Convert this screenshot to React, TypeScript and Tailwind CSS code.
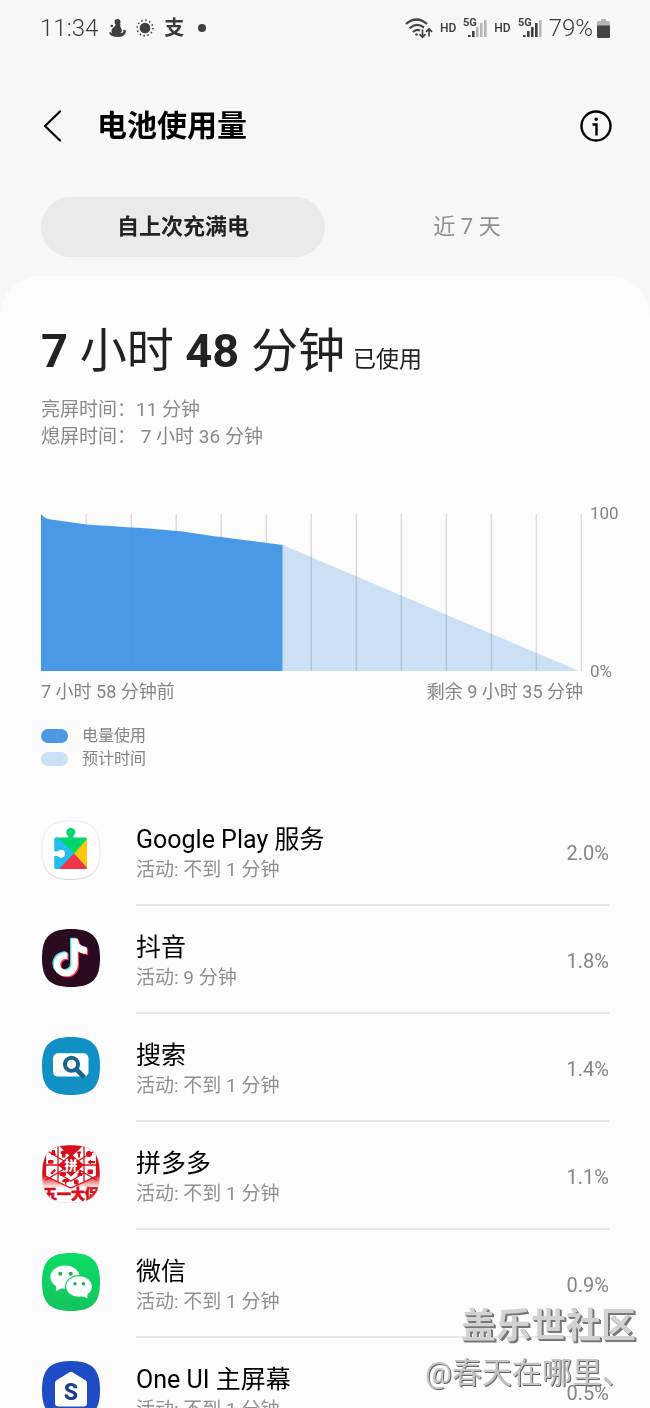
import React from 'react';
import { FaTiktok } from 'react-icons/fa6';

const SQUIRCLE = 'M29 0C50 0 58 8 58 29S50 58 29 58 0 50 0 29 8 0 29 0Z';

const PlayServicesIcon = () => (
  <svg viewBox="0 0 58 58" className="size-[58px] overflow-visible" aria-hidden="true">
    <path d={SQUIRCLE} fill="#d4d4d4" transform="translate(0 1)" />
    <path d={SQUIRCLE} fill="#fff" stroke="#e6e6e6" strokeWidth="0.8" />
    <clipPath id="puzzle">
      <path d="M14 16.5H26.3V14.9A4.500 4.500 0 1 1 31.3 14.9V16.5H43.5Q45 16.5 45 18V46.5Q45 48 43.5 48H14Q12.500 48 12.500 46.500V35.200H15.700A4.200 4.200 0 1 0 15.700 30.200H12.500V18Q12.500 16.500 14 16.500Z" />
    </clipPath>
    <g clipPath="url(#puzzle)">
      <rect width="58" height="58" fill="#00d66b" />
      <path d="M12 13 32 32.500 16 50H10V13Z" fill="#22bdf0" />
      <path d="M46 17 32 32.500 46 48Z" fill="#fdc60a" />
      <path d="M32 32.500 47 49H16Z" fill="#f0354a" />
    </g>
  </svg>
);

const DouyinIcon = () => (
  <svg viewBox="0 0 58 58" className="size-[58px]" aria-hidden="true">
    <path d={SQUIRCLE} fill="#2b0b1f" />
    <FaTiktok x="8" y="8.500" size="38" color="#3fe0dc" />
    <FaTiktok x="10.500" y="10.500" size="38" color="#fb3a5f" />
    <FaTiktok x="9.300" y="9.500" size="38" color="#fff" />
  </svg>
);

const FinderIcon = () => (
  <svg viewBox="0 0 58 58" className="size-[58px]" aria-hidden="true">
    <path d={SQUIRCLE} fill="#1090c4" />
    <rect x="11" y="16.200" width="35.500" height="23.400" rx="5" fill="#fff" />
    <circle cx="29.500" cy="27.300" r="6.600" fill="none" stroke="#1b648f" strokeWidth="3.900" />
    <path d="M34.500 32.500 42.300 40.300" stroke="#1b648f" strokeWidth="4.600" />
  </svg>
);

const PinduoduoIcon = () => (
  <svg viewBox="0 0 58 58" className="size-[58px]" aria-hidden="true">
    <clipPath id="pddShape">
      <path d={SQUIRCLE} />
    </clipPath>
    <linearGradient id="pddFade" x1="0" y1="0" x2="0" y2="1">
      <stop offset="0.700" stopColor="#d80f1b" />
      <stop offset="1" stopColor="#fff" />
    </linearGradient>
    <g clipPath="url(#pddShape)">
      <rect width="58" height="58" fill="#fff" />
      <rect width="58" height="43" fill="url(#pddFade)" />
      <path d="M3.500 5 16 0H42L54.500 5V31L29 43 3.500 31Z" fill="#fff" />
      <path
        d="M16 0V37M42 0V37M3.500 5 54.500 35M54.500 5 3.500 35M3.500 5V31L29 43 54.500 31V5M3.500 20H54.500M16 28 29 36 42 28"
        fill="none"
        stroke="#d80f1b"
        strokeWidth="1.300"
      />
      <path d="M16 0H42L29 12Z" fill="#d80f1b" />
      <path d="M29 9 42 20 29 31.500 16 20Z" fill="#d80f1b" />
      <g fill="#d80f1b">
        <path d="M10 5h2.500l1.500 5h-5zM18.500 7l2-1.500h3.500l2 1.500-1.500 2h-1v3.500h-3.500v-3.500h-1z" />
        <path d="M34.500 6.500h5l-1.500 3v3h-2v-3z" />
        <circle cx="47" cy="9" r="3" />
        <rect x="6" y="15" width="5.500" height="3.700" rx="1" />
        <path d="M45.500 17l3.500-2.500v1.500h4v2.200h-4v1.500z" />
        <path d="M8 28l4.500-4 1.500 1.500L10 29.500z" />
        <rect x="18" y="27" width="6" height="4" rx="1" />
        <path d="M20 37a3.800 3.800 0 0 1 7.500 0h-3v2.500h-1.500v-2.500z" />
        <rect x="32" y="34.500" width="4.500" height="5" rx="1" />
        <path d="M36.500 26h2.500v2h1V31h-4.500v-3h1z" />
        <rect x="45.500" y="24.500" width="5.500" height="4.500" rx="1" />
      </g>
      <text x="29" y="24.500" textAnchor="middle" fontSize="13" fontWeight="900" fill="#fff">
        拼
      </text>
      <text
        x="29"
        y="54"
        textAnchor="middle"
        fontSize="14"
        fontWeight="900"
        fill="#d80f1b"
        stroke="#d80f1b"
        strokeWidth="0.600"
      >
        五一大促
      </text>
    </g>
    <path d={SQUIRCLE} fill="none" stroke="#e3d6d6" strokeWidth="0.600" />
  </svg>
);

const WechatIcon = () => (
  <svg viewBox="0 0 58 58" className="size-[58px]" aria-hidden="true">
    <linearGradient id="wechatBg" x1="0" y1="0" x2="0" y2="1">
      <stop offset="0" stopColor="#0bdc66" />
      <stop offset="1" stopColor="#14c45e" />
    </linearGradient>
    <path d={SQUIRCLE} fill="url(#wechatBg)" />
    <ellipse cx="23" cy="24" rx="14.600" ry="11.500" fill="#fff" />
    <path d="M14.500 31 13.800 38.200 21 34.500Z" fill="#fff" />
    <ellipse cx="37" cy="33.500" rx="14" ry="11.400" fill="#12ce62" />
    <ellipse cx="37" cy="33.500" rx="12.800" ry="10.200" fill="#fff" />
    <path d="M45.500 39 45.300 45.300 39 42.500Z" fill="#fff" />
    <g fill="#16b55a">
      <circle cx="18.300" cy="20.700" r="2" />
      <circle cx="28.700" cy="20.700" r="2" />
      <circle cx="33" cy="30.700" r="1.700" />
      <circle cx="41.500" cy="30.700" r="1.700" />
    </g>
  </svg>
);

const OneUiIcon = () => (
  <svg viewBox="0 0 58 58" className="size-[58px]" aria-hidden="true">
    <path d={SQUIRCLE} fill="#1d4cc4" />
    <path
      d="M27.500 11.300Q29 10.300 30.500 11.300L43.500 19.300Q45 20.300 45 22V42Q45 45.500 41.500 45.500H16.500Q13 45.500 13 42V22Q13 20.300 14.500 19.300Z"
      fill="#fff"
    />
    <text x="29" y="39" textAnchor="middle" fontSize="23" fontWeight="800" fill="#1c3f93">
      S
    </text>
  </svg>
);

const apps = [
  { name: 'Google Play 服务', active: '活动: 不到 1 分钟', percent: '2.0%', icon: PlayServicesIcon },
  { name: '抖音', active: '活动: 9 分钟', percent: '1.8%', icon: DouyinIcon },
  { name: '搜索', active: '活动: 不到 1 分钟', percent: '1.4%', icon: FinderIcon },
  { name: '拼多多', active: '活动: 不到 1 分钟', percent: '1.1%', icon: PinduoduoIcon },
  { name: '微信', active: '活动: 不到 1 分钟', percent: '0.9%', icon: WechatIcon },
  { name: 'One UI 主屏幕', active: '活动: 不到 1 分钟', percent: '0.5%', icon: OneUiIcon },
];

const Signal: React.FC<{ bars: number }> = ({ bars }) => (
  <svg viewBox="0 0 24 22" className="h-[22px] w-6" aria-hidden="true">
    <text x="0" y="9" fontSize="11" fontWeight="700" fill="#444">
      5G
    </text>
    {[2, 6, 10, 14, 17].map((height, i) => (
      <rect
        key={height}
        x={5 + i * 4}
        y={20 - height}
        width="2.600"
        height={height}
        fill={i < bars ? '#3f3f3f' : '#b5b5b5'}
      />
    ))}
  </svg>
);

const StatusBar = () => (
  <div className="flex h-14 shrink-0 items-center justify-between px-10 text-[#3a3a3a]">
    <div className="flex items-center gap-[10px]">
      <span className="text-[24px] leading-7 font-light">11:34</span>
      <svg viewBox="0 0 18 20" className="h-5 w-[18px]" fill="#3f3f3f" aria-hidden="true">
        <circle cx="9.500" cy="4" r="3" />
        <path d="M8 6h4.500q-1 2 .5 4 2 3-.5 5h1.500q1.500-.5 1.500-3.500l2.500 1q0 6-7.500 6.500Q2 19 1 14.500q1.500-.5 3 .5-1.500-3 1-5Q7.500 8 8 6Z" />
        <circle cx="3.800" cy="8" r="1.300" />
      </svg>
      <svg viewBox="0 0 18 18" className="size-[18px]" aria-hidden="true">
        <circle cx="9" cy="9" r="5.300" fill="#3f3f3f" />
        <circle
          cx="9"
          cy="9"
          r="7.800"
          fill="none"
          stroke="#3f3f3f"
          strokeWidth="1.600"
          strokeDasharray="1.500 2.584"
        />
      </svg>
      <span className="text-[20px] leading-6 font-bold">支</span>
      <span className="ml-1 size-2 rounded-full bg-[#3f3f3f]" />
    </div>
    <div className="flex items-center gap-[7px]">
      <svg
        viewBox="0 0 28 22"
        className="h-[22px] w-7"
        fill="none"
        stroke="#444"
        strokeWidth="2.200"
        aria-hidden="true"
      >
        <path d="M1 7Q11.500-2 22 7M4.500 11.200Q11.500 5 19 10.500M8 15Q11.500 11.500 15 13.500" />
        <circle cx="11.500" cy="17.500" r="1.200" fill="#444" stroke="none" />
        <path d="M17.500 12.500V20M14.500 17.200l3 3 3-3M24 19.500V12M21 14.800l3-3 3 3" strokeWidth="1.700" />
      </svg>
      <span className="text-[12px] leading-4 font-medium">HD</span>
      <Signal bars={2} />
      <span className="text-[12px] leading-4 font-medium">HD</span>
      <Signal bars={4} />
      <div className="flex items-center gap-1">
        <span className="text-[24px] leading-7 font-light">79%</span>
        <svg viewBox="0 0 13 19" className="h-[19px] w-[13px]" aria-hidden="true">
          <path d="M4 0h5v2h2.500Q13 2 13 3.500V8H0V3.500Q0 2 1.500 2H4Z" fill="#b5b5b5" />
          <path d="M0 6.500h13v11q0 1.500-1.500 1.500h-10Q0 19 0 17.500Z" fill="#444" />
        </svg>
      </div>
    </div>
  </div>
);

const gridLines = Array.from({ length: 13 }, (_, i) => i * 45.1 + 0.2);

const BatteryChart = () => (
  <div>
    <div className="flex gap-2">
      <svg viewBox="0 0 542 158" preserveAspectRatio="none" className="h-[158px] min-w-0 flex-1">
        {gridLines.map((x) => (
          <path key={x} d={`M${x} 1V158`} stroke="#dcdcdc" strokeWidth="1.500" />
        ))}
        <path d="M242 32 539 158H242Z" fill="#cee3f8" className="mix-blend-multiply" />
        <path
          d="M0 1Q4 6 10 6.500L46 11.500Q60 12.500 108 15.500L142 18.500 172 23 242 32V158H0Z"
          fill="#3f93e4"
          fillOpacity="0.940"
        />
      </svg>
      <div className="-my-2 flex w-[30px] flex-col justify-between text-[17px] leading-4 text-[#858585]">
        <span>100</span>
        <span>0%</span>
      </div>
    </div>
    <div className="mt-[9px] mr-[37px] flex justify-between text-[18px] leading-6 text-[#858585]">
      <span>7 小时 58 分钟前</span>
      <span>剩余 9 小时 35 分钟</span>
    </div>
  </div>
);

const App: React.FC = () => {
  return (
    <div className="relative flex h-screen flex-col overflow-hidden bg-[#f7f7f7] font-[Roboto,'Noto_Sans_CJK_SC',sans-serif]">
      <StatusBar />

      <header className="mt-[38px] flex h-16 shrink-0 items-center pr-[38px] pl-[43px]">
        <button type="button" aria-label="返回" className="mr-9">
          <svg viewBox="0 0 18 32" className="h-8 w-[18px]" fill="none" stroke="#000" strokeWidth="2.200">
            <path d="M17 1.500 2 16 17 30.500" strokeLinecap="round" strokeLinejoin="round" />
          </svg>
        </button>
        <h1 className="flex-1 text-[30px] leading-10 font-bold text-black">电池使用量</h1>
        <button type="button" aria-label="信息">
          <svg viewBox="0 0 32 32" className="size-8" fill="none" stroke="#000" strokeWidth="2.400">
            <circle cx="16" cy="16" r="14.500" />
            <path d="M12.500 14.500h4v11" />
            <circle cx="16.200" cy="9.200" r="1.700" fill="#000" stroke="none" />
          </svg>
        </button>
      </header>

      <nav className="mt-[39px] flex shrink-0 px-[41px] text-[22px] leading-8">
        <button type="button" className="h-[60px] flex-1 rounded-full bg-[#eaeaea] font-bold text-[#222]">
          自上次充满电
        </button>
        <button type="button" className="h-[60px] flex-1 text-[#8f8f8f]">
          近 7 天
        </button>
      </nav>

      <main className="mt-[19px] flex-1 shrink-0 rounded-t-[40px] bg-[#fcfcfc]">
        <section className="pt-11 pr-[30px] pl-[41px]">
          <h2 className="text-[47px] leading-[62px] text-[#222]">
            <b>7</b> 小时 <b>48</b> 分钟
            <span className="ml-2 text-[23px]">已使用</span>
          </h2>
          <div className="mt-[5px] text-[19px] leading-[27px] text-[#8a8a8a]">
            <p>亮屏时间：11 分钟</p>
            <p>熄屏时间： 7 小时 36 分钟</p>
          </div>

          <div className="mt-[63px]">
            <BatteryChart />
          </div>

          <ul className="mt-5 text-[16px] leading-[23px] text-[#858585]">
            <li className="flex items-center gap-[14px]">
              <span className="h-[14px] w-[27px] rounded-full bg-[#4b98e6]" />
              电量使用
            </li>
            <li className="flex items-center gap-[14px]">
              <span className="h-[14px] w-[27px] rounded-full bg-[#cce1f6]" />
              预计时间
            </li>
          </ul>
        </section>

        <ul className="mt-7 pr-[41px] pl-[42px]">
          {apps.map((app) => (
            <li key={app.name} className="flex h-[108px] items-center gap-9">
              <span className="mb-1 shrink-0">
                <app.icon />
              </span>
              <div className="flex h-full flex-1 items-center justify-between border-b-2 border-[#e8e8e8] pt-1">
                <div className="mt-0.5">
                  <h3 className="text-[25px] leading-8 text-black">{app.name}</h3>
                  <p className="text-[19px] leading-7 text-[#8f8f8f]">{app.active}</p>
                </div>
                <span className="text-[20px] leading-7 text-[#858585]">{app.percent}</span>
              </div>
            </li>
          ))}
        </ul>
      </main>

      <div className="pointer-events-none absolute right-[14px] bottom-3 text-[#d2d2d2] [text-shadow:1px_1px_0_#777,2px_2px_0_#777]">
        <p className="text-[35px] leading-[46px] font-bold">盖乐世社区</p>
        <p className="-ml-9 text-[30px] leading-[46px] text-[#c4c4c4] [text-shadow:1px_1px_0_#666]">
          @春天在哪里、
        </p>
      </div>
    </div>
  );
};

export default App;
